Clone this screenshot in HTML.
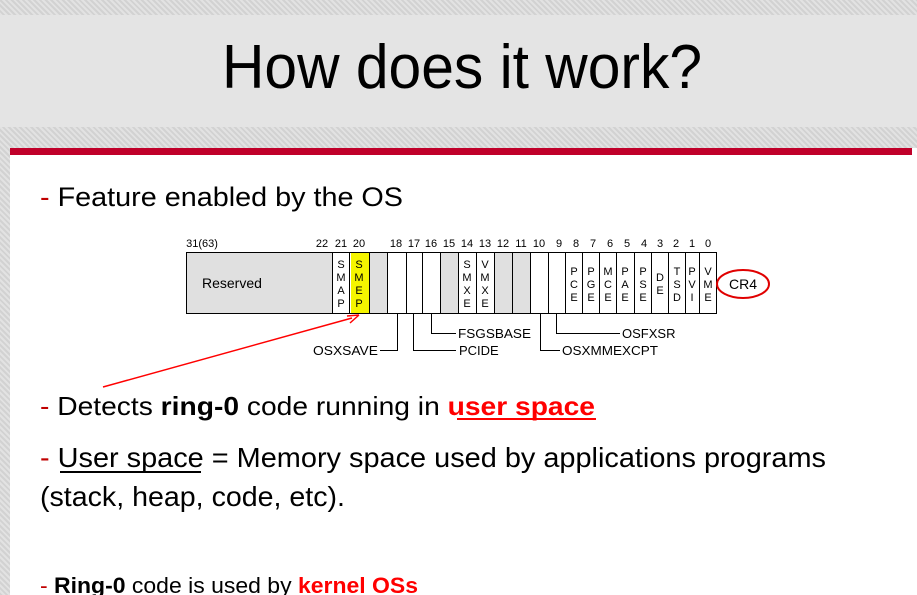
<!DOCTYPE html>
<html><head><meta charset="utf-8"><style>
html,body{margin:0;padding:0;}
body{width:917px;height:595px;overflow:hidden;background:repeating-linear-gradient(45deg,#d2d2d2 0 2px,#e2e2e2 2px 4px);position:relative;font-family:"Liberation Sans",sans-serif;}
</style></head><body>
<svg width="917" height="595" style="position:absolute;left:0;top:0" font-family="Liberation Sans, sans-serif">
<rect x="0" y="15" width="917" height="112" fill="#e4e4e4"/>
<text x="462" y="88" font-size="62" text-anchor="middle" textLength="480" lengthAdjust="spacingAndGlyphs" fill="#000">How does it work?</text>
<rect x="10" y="148" width="907" height="447" fill="#fff"/>
<rect x="10" y="148" width="902" height="7" fill="#c0002a"/>
<text x="40" y="206" font-size="27" textLength="363" lengthAdjust="spacingAndGlyphs"><tspan fill="#c00000">- </tspan><tspan fill="#000">Feature enabled by the OS</tspan></text>

<g font-size="11" fill="#000" text-anchor="middle">
<text x="202" y="247">31(63)</text><text x="322" y="247">22</text><text x="341" y="247">21</text><text x="359" y="247">20</text>
<text x="396" y="247">18</text><text x="414" y="247">17</text><text x="431" y="247">16</text><text x="449" y="247">15</text>
<text x="467" y="247">14</text><text x="485" y="247">13</text><text x="503" y="247">12</text><text x="521" y="247">11</text>
<text x="539" y="247">10</text><text x="559" y="247">9</text><text x="576" y="247">8</text><text x="593" y="247">7</text>
<text x="610" y="247">6</text><text x="627" y="247">5</text><text x="644" y="247">4</text><text x="660" y="247">3</text>
<text x="676" y="247">2</text><text x="692" y="247">1</text><text x="708" y="247">0</text>
</g>
<g stroke="#000" stroke-width="1">
<rect x="186.5" y="252.5" width="146" height="61" fill="#e0e0e0"/>
<rect x="332.5" y="252.5" width="17" height="61" fill="#fff"/>
<rect x="349.5" y="252.5" width="20" height="61" fill="#fff"/>
<rect x="369.5" y="252.5" width="18" height="61" fill="#e0e0e0"/>
<rect x="387.5" y="252.5" width="19" height="61" fill="#fff"/>
<rect x="406.5" y="252.5" width="16" height="61" fill="#fff"/>
<rect x="422.5" y="252.5" width="18" height="61" fill="#fff"/>
<rect x="440.5" y="252.5" width="18" height="61" fill="#e0e0e0"/>
<rect x="458.5" y="252.5" width="18" height="61" fill="#fff"/>
<rect x="476.5" y="252.5" width="18" height="61" fill="#fff"/>
<rect x="494.5" y="252.5" width="18" height="61" fill="#e0e0e0"/>
<rect x="512.5" y="252.5" width="18" height="61" fill="#e0e0e0"/>
<rect x="530.5" y="252.5" width="18" height="61" fill="#fff"/>
<rect x="548.5" y="252.5" width="17" height="61" fill="#fff"/>
<rect x="565.5" y="252.5" width="17" height="61" fill="#fff"/>
<rect x="582.5" y="252.5" width="17" height="61" fill="#fff"/>
<rect x="599.5" y="252.5" width="17" height="61" fill="#fff"/>
<rect x="616.5" y="252.5" width="18" height="61" fill="#fff"/>
<rect x="634.5" y="252.5" width="17" height="61" fill="#fff"/>
<rect x="651.5" y="252.5" width="17" height="61" fill="#fff"/>
<rect x="668.5" y="252.5" width="17" height="61" fill="#fff"/>
<rect x="685.5" y="252.5" width="14" height="61" fill="#fff"/>
<rect x="699.5" y="252.5" width="17" height="61" fill="#fff"/>
</g>
<rect x="351" y="253" width="18" height="60" fill="#f5f500"/>
<text x="202" y="288" font-size="14">Reserved</text>
<g font-size="11" fill="#000" text-anchor="middle">
<text x="341" y="268">S</text><text x="341" y="281">M</text><text x="341" y="294">A</text><text x="341" y="307">P</text>
<text x="359" y="268">S</text><text x="359" y="281">M</text><text x="359" y="294">E</text><text x="359" y="307">P</text>
<text x="467" y="268">S</text><text x="467" y="281">M</text><text x="467" y="294">X</text><text x="467" y="307">E</text>
<text x="485" y="268">V</text><text x="485" y="281">M</text><text x="485" y="294">X</text><text x="485" y="307">E</text>
<text x="574" y="275">P</text><text x="574" y="288">C</text><text x="574" y="301">E</text>
<text x="591" y="275">P</text><text x="591" y="288">G</text><text x="591" y="301">E</text>
<text x="608" y="275">M</text><text x="608" y="288">C</text><text x="608" y="301">E</text>
<text x="625" y="275">P</text><text x="625" y="288">A</text><text x="625" y="301">E</text>
<text x="643" y="275">P</text><text x="643" y="288">S</text><text x="643" y="301">E</text>
<text x="660" y="281">D</text><text x="660" y="294">E</text>
<text x="677" y="275">T</text><text x="677" y="288">S</text><text x="677" y="301">D</text>
<text x="692" y="275">P</text><text x="692" y="288">V</text><text x="692" y="301">I</text>
<text x="708" y="275">V</text><text x="708" y="288">M</text><text x="708" y="301">E</text>
</g>
<ellipse cx="743" cy="284" rx="26" ry="14" fill="none" stroke="#e00000" stroke-width="2"/>
<text x="743" y="289" font-size="14" text-anchor="middle">CR4</text>
<g stroke="#000" fill="none" stroke-width="1">
<path d="M397.5 314 V350.5 H380"/>
<path d="M413.5 314 V350.5 H456"/>
<path d="M431.5 314 V333.5 H456"/>
<path d="M540.5 314 V350.5 H560"/>
<path d="M556.5 314 V333.5 H620"/>
</g>
<g font-size="13" fill="#000">
<text x="458" y="338" textLength="73" lengthAdjust="spacingAndGlyphs">FSGSBASE</text>
<text x="459" y="355">PCIDE</text>
<text x="313" y="355" textLength="65" lengthAdjust="spacingAndGlyphs">OSXSAVE</text>
<text x="622" y="338">OSFXSR</text>
<text x="562" y="355" textLength="96" lengthAdjust="spacingAndGlyphs">OSXMMEXCPT</text>
</g>
<line x1="103" y1="387" x2="352" y2="318" stroke="#f00" stroke-width="1.5"/>
<path d="M359 315 L347 316 M359 315 L350 323" stroke="#f00" stroke-width="1.5" fill="none"/>

<text x="40" y="415" font-size="26" textLength="555" lengthAdjust="spacingAndGlyphs"><tspan fill="#c00000">- </tspan><tspan>Detects </tspan><tspan font-weight="bold">ring-0</tspan><tspan> code running in </tspan><tspan fill="#f00" font-weight="bold">user space</tspan></text>
<line x1="457" y1="419" x2="596" y2="419" stroke="#f00" stroke-width="2"/>
<text x="40" y="467" font-size="28" textLength="786" lengthAdjust="spacingAndGlyphs"><tspan fill="#c00000">- </tspan><tspan>User space = Memory space used by applications programs</tspan></text>
<line x1="60" y1="472" x2="201" y2="472" stroke="#000" stroke-width="2"/>
<text x="40" y="506" font-size="28" textLength="305" lengthAdjust="spacingAndGlyphs">(stack, heap, code, etc).</text>
<text x="40" y="593" font-size="22" textLength="378" lengthAdjust="spacingAndGlyphs"><tspan fill="#c00000">- </tspan><tspan font-weight="bold">Ring-0</tspan><tspan> code is used by </tspan><tspan fill="#f00" font-weight="bold">kernel OSs</tspan></text>
</svg>
</body></html>
